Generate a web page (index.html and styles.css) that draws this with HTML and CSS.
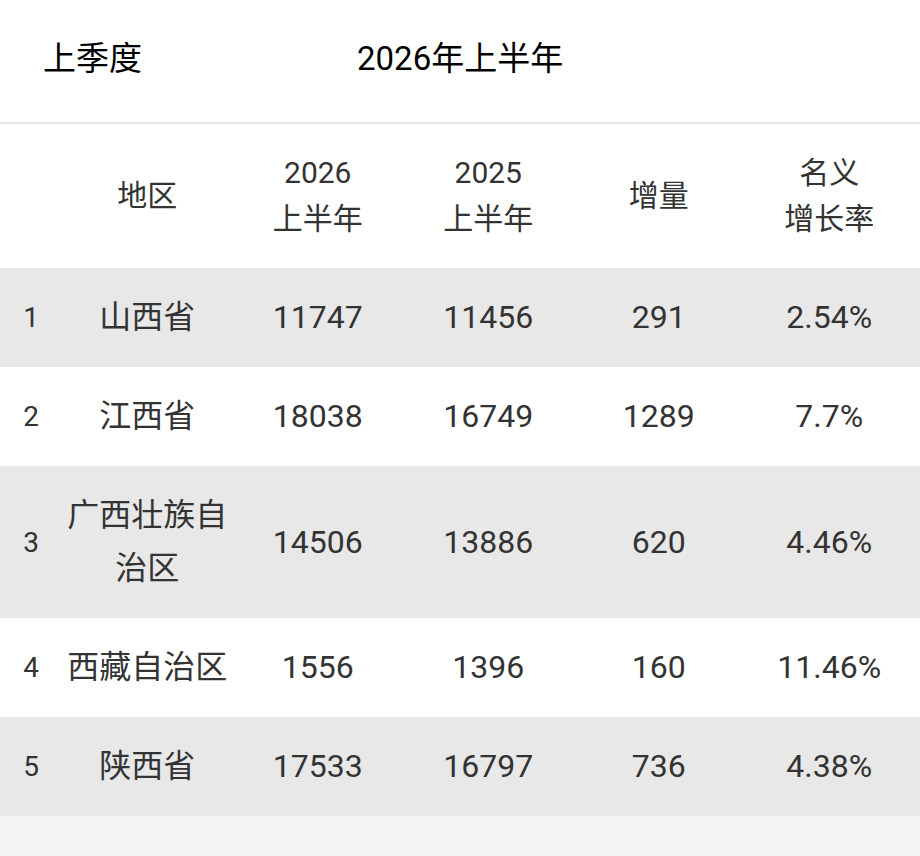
FILE: index.html
```html
<!DOCTYPE html>
<html lang="zh-CN">
<head>
<meta charset="utf-8">
<title>2026年上半年</title>
<link rel="stylesheet" href="styles.css">
</head>
<body>
<div class="page">
  <div class="tabs">
    <div class="tab">上季度</div>
    <div class="tab tab-active">2026年上半年</div>
  </div>
  <div class="table">
    <div class="row head">
      <div class="cell idx"></div>
      <div class="cell">地区</div>
      <div class="cell">2026<br>上半年</div>
      <div class="cell">2025<br>上半年</div>
      <div class="cell">增量</div>
      <div class="cell">名义<br>增长率</div>
    </div>
    <div class="row alt">
      <div class="cell idx">1</div>
      <div class="cell">山西省</div>
      <div class="cell">11747</div>
      <div class="cell">11456</div>
      <div class="cell">291</div>
      <div class="cell">2.54%</div>
    </div>
    <div class="row">
      <div class="cell idx">2</div>
      <div class="cell">江西省</div>
      <div class="cell">18038</div>
      <div class="cell">16749</div>
      <div class="cell">1289</div>
      <div class="cell">7.7%</div>
    </div>
    <div class="row alt">
      <div class="cell idx">3</div>
      <div class="cell">广西壮族自治区</div>
      <div class="cell">14506</div>
      <div class="cell">13886</div>
      <div class="cell">620</div>
      <div class="cell">4.46%</div>
    </div>
    <div class="row">
      <div class="cell idx">4</div>
      <div class="cell">西藏自治区</div>
      <div class="cell">1556</div>
      <div class="cell">1396</div>
      <div class="cell">160</div>
      <div class="cell">11.46%</div>
    </div>
    <div class="row alt">
      <div class="cell idx">5</div>
      <div class="cell">陕西省</div>
      <div class="cell">17533</div>
      <div class="cell">16797</div>
      <div class="cell">736</div>
      <div class="cell">4.38%</div>
    </div>
  </div>
  <div class="rest"></div>
</div>
</body>
</html>
```

FILE: styles.css
```css
html, body {
  margin: 0;
  padding: 0;
  background: #f4f4f4;
}
body {
  font-family: "Roboto", "Noto Sans CJK SC", sans-serif;
  color: #333333;
}
.page {
  width: 920px;
  height: 856px;
  display: flex;
  flex-direction: column;
  background: #f4f4f4;
}
.tabs {
  height: 122px;
  background: #ffffff;
  display: flex;
  align-items: center;
  padding-left: 43px;
  border-bottom: 2px solid #e6e6e6;
  box-sizing: content-box;
}
.tab {
  font-size: 33px;
  color: #000000;
  font-weight: 400;
  line-height: 40px;
  margin-top: -4px;
}
.tab-active {
  margin-left: 215px;
}
.table {
  display: flex;
  flex-direction: column;
}
.row {
  display: grid;
  grid-template-columns: 62px repeat(5, 170.5px);
  align-items: center;
  background: #ffffff;
  padding: 23px 0;
  font-size: 32px;
  line-height: 53px;
}
.row.alt {
  background: #e8e8e8;
}
.row.head {
  font-size: 30px;
  line-height: 46px;
  padding: 26px 0;
  color: #333333;
}
.cell {
  text-align: center;
}
.idx {
  font-size: 28px;
}
.rest {
  flex: 1;
  background: #f4f4f4;
}
```
